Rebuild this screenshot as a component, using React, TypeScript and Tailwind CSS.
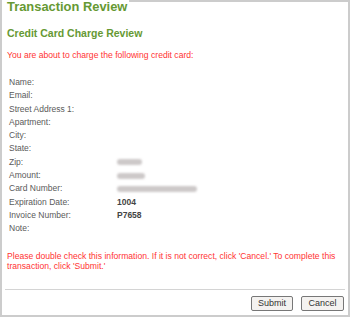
import React from "react";

const rows: { label: string; value?: string; blur?: number }[] = [
  { label: "Name:" },
  { label: "Email:" },
  { label: "Street Address 1:" },
  { label: "Apartment:" },
  { label: "City:" },
  { label: "State:" },
  { label: "Zip:", blur: 25 },
  { label: "Amount:", blur: 28 },
  { label: "Card Number:", blur: 80 },
  { label: "Expiration Date:", value: "1004" },
  { label: "Invoice Number:", value: "P7658" },
  { label: "Note:" },
];

export default function App() {
  return (
    <div className="relative h-[319px] w-[350px] bg-white font-['Liberation_Sans',Arial,sans-serif]">
      <div className="flex h-[317px] flex-col border-x-2 border-b-2 border-[#cccccc]">
        <div className="flex">
          <h1 className="bg-white pl-[5px] pr-[2px] text-[12.9px] font-bold leading-[13px] text-[#669933]">
            Transaction Review
          </h1>
          <div className="flex-1 border-t-2 border-[#cccccc]" />
        </div>

        <h2 className="mt-[14px] pl-[5px] text-[10.5px] font-bold leading-[12px] text-[#669933]">
          Credit Card Charge Review
        </h2>

        <p className="mt-[11px] pl-[5px] text-[8.6px] leading-[10px] text-[#ff3333]">
          You are about to charge the following credit card:
        </p>

        <div className="mt-[16px] grid grid-cols-[108px_1fr] pl-[7px] text-[8.5px] leading-[13.3px] text-[#5a5a5a]">
          {rows.map((row) => (
            <React.Fragment key={row.label}>
              <div>{row.label}</div>
              <div className="flex items-center">
                {row.value ? (
                  <span className="font-bold text-[#444444]">{row.value}</span>
                ) : null}
                {row.blur ? (
                  <span
                    className="h-[6px] rounded-full bg-[#cdc9c9] blur-[1px]"
                    style={{ width: row.blur }}
                  />
                ) : null}
              </div>
            </React.Fragment>
          ))}
        </div>

        <p className="mt-[15.5px] pl-[5px] pr-[4px] text-[8.6px] leading-[10px] text-[#ff3333]">
          Please double check this information. If it is not correct, click 'Cancel.' To complete this
          <br />
          transaction, click 'Submit.'
        </p>

        <div className="mx-[3px] mt-[18.4px] border-t border-[#d4d4d4]" />

        <div className="mt-[5.4px] flex justify-end gap-[8px] pr-[4px]">
          <button
            type="button"
            className="h-[15px] w-[42px] rounded-[2px] border border-[#777777] bg-[#f4f2f0] text-[9px] leading-[13px] text-[#333333]"
          >
            Submit
          </button>
          <button
            type="button"
            className="h-[15px] w-[43px] rounded-[2px] border border-[#777777] bg-[#f4f2f0] text-[9px] leading-[13px] text-[#333333]"
          >
            Cancel
          </button>
        </div>
      </div>
    </div>
  );
}
